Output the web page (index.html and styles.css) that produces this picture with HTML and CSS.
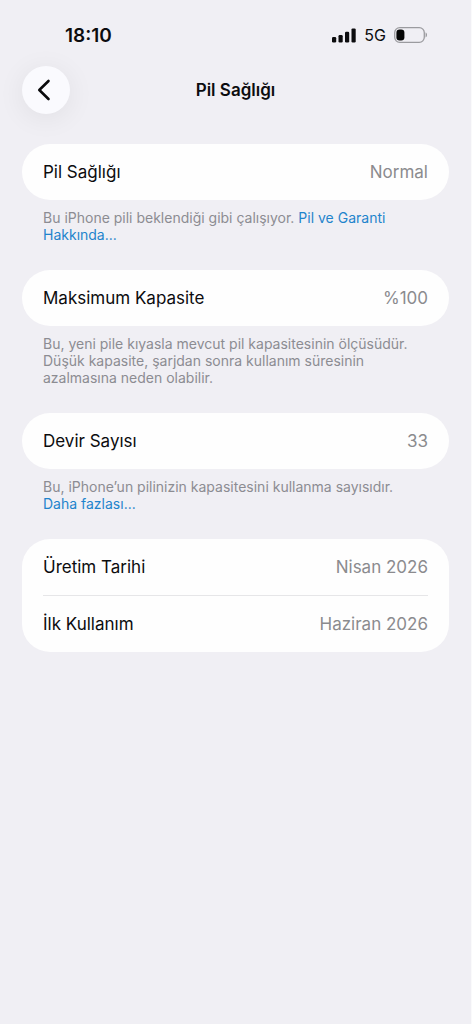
FILE: index.html
```html
<!DOCTYPE html>
<html lang="tr">
<head>
<meta charset="utf-8">
<meta name="viewport" content="width=device-width, initial-scale=1">
<title>Pil Sağlığı</title>
<link rel="stylesheet" href="styles.css">
</head>
<body>
<div class="screen">
  <div class="status">
    <span class="clock">18:10</span>
    <div class="indicators">
      <svg class="signal" width="24" height="15" viewBox="0 0 24 15" aria-hidden="true">
        <rect x="0" y="9" width="4.2" height="5.4" rx="1.2"/>
        <rect x="6.5" y="7" width="4.2" height="7.4" rx="1.2"/>
        <rect x="13" y="3.8" width="4.2" height="10.6" rx="1.2"/>
        <rect x="19.5" y="0.4" width="4.2" height="14" rx="1.2"/>
      </svg>
      <span class="network">5G</span>
      <svg class="battery" width="34" height="16" viewBox="0 0 34 16" aria-hidden="true">
        <rect x="0.7" y="0.7" width="29.6" height="14.6" rx="5" fill="none" stroke="#9b9b9f" stroke-width="1.3"/>
        <rect x="2.4" y="2.6" width="8" height="10.8" rx="3.2" fill="#060606"/>
        <path d="M31.6 5.6c1.7.6 1.7 4.2 0 4.8z" fill="#8c8c90"/>
      </svg>
    </div>
  </div>

  <header class="navbar">
    <button class="back" type="button" aria-label="Geri">
      <svg width="14" height="22" viewBox="0 0 14 22" aria-hidden="true">
        <path d="M11.5 2 2.3 11l9.2 9" fill="none" stroke="#0a0a0c" stroke-width="2.6" stroke-linecap="round" stroke-linejoin="round"/>
      </svg>
    </button>
    <h1 class="title">Pil Sağlığı</h1>
  </header>

  <main class="groups">
    <section>
      <dl class="card">
        <div class="row"><dt>Pil Sağlığı</dt><dd>Normal</dd></div>
      </dl>
      <p class="note">Bu iPhone pili beklendiği gibi çalışıyor. <a href="#garanti">Pil ve Garanti Hakkında...</a></p>
    </section>
    <section>
      <dl class="card">
        <div class="row"><dt>Maksimum Kapasite</dt><dd>%100</dd></div>
      </dl>
      <p class="note">Bu, yeni pile kıyasla mevcut pil kapasitesinin ölçüsüdür. Düşük kapasite, şarjdan sonra kullanım süresinin azalmasına neden olabilir.</p>
    </section>
    <section>
      <dl class="card">
        <div class="row"><dt>Devir Sayısı</dt><dd>33</dd></div>
      </dl>
      <p class="note">Bu, iPhone’un pilinizin kapasitesini kullanma sayısıdır. <a href="#devir">Daha fazlası...</a></p>
    </section>
    <section>
      <dl class="card">
        <div class="row"><dt>Üretim Tarihi</dt><dd>Nisan 2026</dd></div>
        <div class="row"><dt>İlk Kullanım</dt><dd>Haziran 2026</dd></div>
      </dl>
    </section>
  </main>
</div>
</body>
</html>
```
FILE: styles.css
```css
* {
  box-sizing: border-box;
}

body {
  margin: 0;
  background: #f0eff4;
  color: #0c0c0e;
  font-family: Inter, "Liberation Sans", sans-serif;
}

.screen {
  min-height: 100vh;
  padding: 0 22px;
  border-right: 1px solid #fafafb;
}

.status {
  display: flex;
  justify-content: space-between;
  align-items: center;
  height: 66px;
  padding: 4px 21px 0 43px;
}

.clock {
  font-size: 19px;
  font-weight: 600;
}

.indicators {
  display: flex;
  align-items: center;
  gap: 8px;
}

.signal {
  fill: #0c0c0e;
}

.network {
  font-size: 16px;
  font-weight: 400;
}

.navbar {
  display: grid;
  grid-template-columns: 48px 1fr 48px;
  align-items: center;
}

.back {
  display: flex;
  align-items: center;
  justify-content: center;
  width: 48px;
  height: 48px;
  padding: 0 4px 0 0;
  border: 0;
  border-radius: 50%;
  background: #fafafe;
  box-shadow: 0 4px 28px rgba(0, 0, 0, 0.07);
}

.title {
  margin: 0;
  font-size: 17px;
  font-weight: 600;
  text-align: center;
}

.groups {
  display: flex;
  flex-direction: column;
  gap: 27px;
  padding-top: 30px;
}

.card {
  margin: 0;
  padding: 0 21px;
  border-radius: 28px;
  background: #fefefe;
}

.row {
  display: flex;
  justify-content: space-between;
  align-items: center;
  height: 56px;
  font-size: 17px;
}

.row + .row {
  height: 57px;
  border-top: 1px solid #e6e6e8;
}

.row dd {
  margin: 0;
  color: #8b8b8e;
}

.note {
  margin: 9px 21px 0;
  color: #8c8c92;
  font-size: 14px;
  line-height: 17px;
}

.note a {
  color: #1f84cc;
  text-decoration: none;
}
```
